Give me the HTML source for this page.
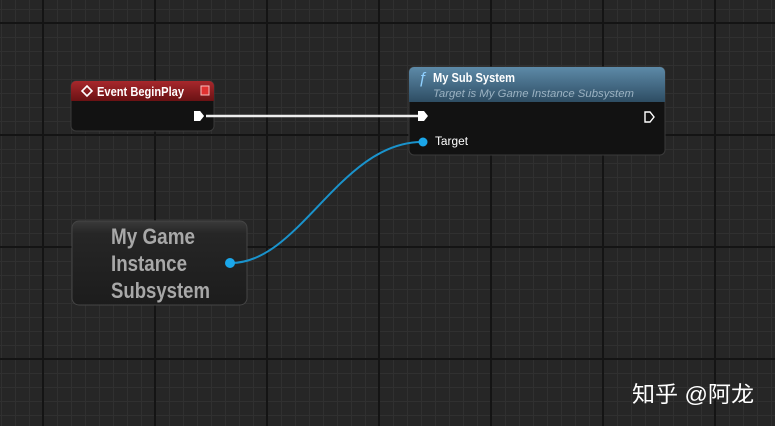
<!DOCTYPE html>
<html><head><meta charset="utf-8"><style>
html,body{margin:0;padding:0;background:#262626;width:775px;height:426px;overflow:hidden}
svg{display:block}
text{font-family:"Liberation Sans",sans-serif}
</style></head><body>
<svg width="775" height="426" viewBox="0 0 775 426" xmlns="http://www.w3.org/2000/svg">
<defs>
<pattern id="minor" x="1" y="9" width="14" height="14" patternUnits="userSpaceOnUse">
<path d="M0 0.5H14M0.5 0V14" stroke="#303030" stroke-width="1" fill="none"/>
</pattern>
<linearGradient id="red" x1="0" y1="0" x2="0" y2="1"><stop offset="0" stop-color="#a8282c"/><stop offset="1" stop-color="#6a1214"/></linearGradient>
<linearGradient id="blue" x1="0" y1="0" x2="0" y2="1"><stop offset="0" stop-color="#5d8aa8"/><stop offset="1" stop-color="#2e4d63"/></linearGradient>
<linearGradient id="var" x1="0" y1="0" x2="0" y2="1"><stop offset="0" stop-color="#3a3a3a"/><stop offset="0.15" stop-color="#262626"/><stop offset="1" stop-color="#1c1c1c"/></linearGradient>
</defs>
<rect width="775" height="426" fill="#262626"/>
<rect width="775" height="426" fill="url(#minor)"/>
<g stroke="#141414" stroke-width="2">
<path d="M43 0V426M155 0V426M267 0V426M379 0V426M491 0V426M603 0V426M715 0V426"/>
<path d="M0 23H775M0 135H775M0 247H775M0 359H775"/>
</g>
<!-- event node -->
<rect x="71" y="81" width="143" height="50" rx="5" fill="#121212" stroke="#3a3a3a"/>
<path d="M76 81H209a5 5 0 0 1 5 5V101H71V86a5 5 0 0 1 5-5z" fill="url(#red)"/>
<path d="M87 86l5 5-5 5-5-5z" fill="none" stroke="#fff" stroke-width="1.6"/>
<text x="97" y="96" fill="#fff" font-size="12.5" font-weight="bold" textLength="87" lengthAdjust="spacingAndGlyphs">Event BeginPlay</text>
<rect x="201" y="86" width="8" height="9" fill="#e03030" stroke="#f8c0c0" stroke-width="1"/>
<path d="M194 111h6l4 5-4 5h-6z" fill="#fff"/>
<!-- function node -->
<rect x="409" y="67" width="256" height="88" rx="5" fill="#121212" stroke="#3a3a3a"/>
<path d="M414 67H660a5 5 0 0 1 5 5V102H409V72a5 5 0 0 1 5-5z" fill="url(#blue)"/>
<text x="418" y="83" fill="#8fd0ff" font-size="16" font-style="italic" font-family="Liberation Serif,serif">ƒ</text>
<text x="433" y="82" fill="#fff" font-size="12.5" font-weight="bold" textLength="82" lengthAdjust="spacingAndGlyphs">My Sub System</text>
<text x="433" y="97" fill="#9bb2c2" font-size="11" font-style="italic" textLength="201" lengthAdjust="spacingAndGlyphs">Target is My Game Instance Subsystem</text>
<path d="M645 112h5l4 5-4 5h-5z" fill="none" stroke="#fff" stroke-width="1.4"/>
<text x="435" y="145" fill="#fff" font-size="11.5" textLength="33" lengthAdjust="spacingAndGlyphs">Target</text>
<!-- var node -->
<rect x="72" y="221" width="175" height="84" rx="7" fill="url(#var)" stroke="#454545"/>
<g fill="#a8a8a8" font-size="22" font-weight="bold">
<text x="111" y="244" textLength="84" lengthAdjust="spacingAndGlyphs">My Game</text>
<text x="111" y="271" textLength="76" lengthAdjust="spacingAndGlyphs">Instance</text>
<text x="111" y="298" textLength="99" lengthAdjust="spacingAndGlyphs">Subsystem</text>
</g>
<!-- wires -->
<path d="M206 116H418" stroke="#eee" stroke-width="2.5" fill="none"/>
<path d="M231 263C300 263 340 142 422 142" stroke="#1a93cc" stroke-width="2" fill="none"/>
<path d="M194 111h6l4 5-4 5h-6z" fill="#fff"/>
<path d="M418 111h6l4 5-4 5h-6z" fill="#fff"/>
<circle cx="423" cy="142" r="4.5" fill="#1ba7ea"/>
<circle cx="230" cy="263" r="5" fill="#1ba7ea"/>
<text x="632" y="402" fill="#fff" font-size="22" font-family="Liberation Sans,'Noto Sans CJK SC',sans-serif" textLength="122" lengthAdjust="spacingAndGlyphs">知乎 @阿龙</text>
</svg>
</body></html>
